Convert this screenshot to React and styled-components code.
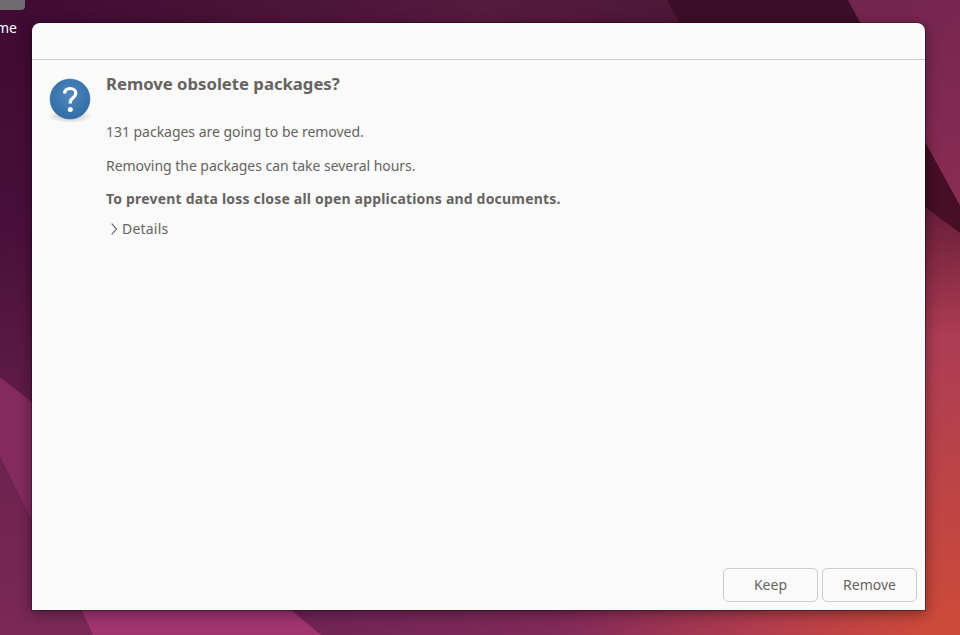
import React from "react";
import styled, { createGlobalStyle } from "styled-components";

const Global = createGlobalStyle`
  html, body { margin: 0; padding: 0; height: 100%; overflow: hidden; background: #4a1040; }
  body { font-family: "Noto Sans", "Open Sans", sans-serif; }
`;

const Stage = styled.div`
  position: relative;
  box-sizing: border-box;
  width: 960px;
  height: 635px;
  padding: 23px 35px 25px 32px;
  display: flex;
  overflow: hidden;
`;

const WallpaperSvg = styled.svg`
  position: absolute;
  inset: 0;
  width: 960px;
  height: 635px;
`;

const DockTab = styled.div`
  position: absolute;
  left: 0;
  top: 0;
  width: 25px;
  height: 10px;
  background: #6f6a6d;
  border-bottom-right-radius: 4px;
`;

const DesktopLabel = styled.span`
  position: absolute;
  left: -4px;
  top: 19px;
  font-size: 14px;
  line-height: 18px;
  color: #ffffff;
`;

const Dialog = styled.section`
  position: relative;
  flex: 1;
  display: flex;
  flex-direction: column;
  background: #fafafa;
  border-radius: 8px 8px 0 0;
  box-shadow: 0 3px 14px rgba(0, 0, 0, 0.45), 0 0 0 1px rgba(40, 0, 30, 0.35);
`;

const TitleBar = styled.header`
  height: 36px;
  border-bottom: 1px solid #cfcfcf;
`;

const Body = styled.div`
  flex: 1;
  display: flex;
  gap: 14px;
  padding: 16px 16px 0;
`;

const IconBox = styled.div`
  width: 44px;
  height: 50px;
  flex: none;
`;

const Content = styled.div`
  display: flex;
  flex-direction: column;
  color: #666361;
`;

const Title = styled.h1`
  margin: -2px 0 29px;
  font-size: 16.7px;
  line-height: 20px;
  font-weight: 700;
`;

const Paragraph = styled.p`
  margin: 0 0 ${(p) => p.$gap}px;
  font-size: 14px;
  line-height: 17px;
  font-weight: ${(p) => (p.$bold ? 700 : 400)};
  letter-spacing: ${(p) => (p.$bold ? "0.19px" : "-0.03px")};
`;

const Expander = styled.div`
  display: flex;
  align-items: center;
  gap: 5px;
  margin-left: 5px;
  font-size: 14px;
  line-height: 17px;
  letter-spacing: 0.2px;
`;

const Footer = styled.footer`
  display: flex;
  justify-content: flex-end;
  gap: 4px;
  padding: 0 8px 8px;
`;

const Button = styled.button`
  width: 95px;
  height: 34px;
  box-sizing: border-box;
  background: #fafafa;
  border: 1px solid #cdcdcd;
  border-radius: 5px;
  font-family: inherit;
  font-size: 14px;
  color: #666361;
  padding: 0 0 2px;
`;

function Wallpaper() {
  return (
    <WallpaperSvg viewBox="0 0 960 635">
      <defs>
        <linearGradient id="top" gradientUnits="userSpaceOnUse" x1="0" y1="0" x2="960" y2="100">
          <stop offset="0" stopColor="#3f0a33" />
          <stop offset="0.5" stopColor="#551a3e" />
          <stop offset="1" stopColor="#43132f" />
        </linearGradient>
        <linearGradient id="leftDark" gradientUnits="userSpaceOnUse" x1="0" y1="20" x2="20" y2="400">
          <stop offset="0" stopColor="#3f0a33" />
          <stop offset="0.55" stopColor="#4a0f3c" />
          <stop offset="1" stopColor="#5f1c47" />
        </linearGradient>
        <linearGradient id="leftLow" gradientUnits="userSpaceOnUse" x1="0" y1="460" x2="0" y2="635">
          <stop offset="0" stopColor="#6e234f" />
          <stop offset="1" stopColor="#7a2858" />
        </linearGradient>
        <linearGradient id="topRight" gradientUnits="userSpaceOnUse" x1="860" y1="0" x2="960" y2="200">
          <stop offset="0" stopColor="#72254f" />
          <stop offset="1" stopColor="#8b2b52" />
        </linearGradient>
        <linearGradient id="rightside" gradientUnits="userSpaceOnUse" x1="930" y1="215" x2="960" y2="620">
          <stop offset="0" stopColor="#6c1f3b" />
          <stop offset="0.3" stopColor="#ad3c54" />
          <stop offset="1" stopColor="#cb4a39" />
        </linearGradient>
        <linearGradient id="bottomRight" gradientUnits="userSpaceOnUse" x1="300" y1="610" x2="930" y2="630">
          <stop offset="0" stopColor="#702456" />
          <stop offset="0.4" stopColor="#80295a" />
          <stop offset="0.75" stopColor="#b53d4c" />
          <stop offset="1" stopColor="#cd4a39" />
        </linearGradient>
      </defs>
      <rect width="960" height="635" fill="url(#top)" />
      <polygon points="0,20 32,20 32,402 0,377" fill="url(#leftDark)" />
      <polygon points="0,377 32,402 32,522 0,457" fill="#842a60" />
      <polygon points="0,457 32,522 32,635 0,635" fill="url(#leftLow)" />
      <rect x="32" y="600" width="928" height="35" fill="url(#bottomRight)" />
      <polygon points="32,600 77,600 93,635 32,635" fill="#7a2858" />
      <polygon points="77,600 279,600 321,635 93,635" fill="#a03570" />
      <polygon points="667,0 848,0 880,60 700,60" fill="#3b0f28" />
      <polygon points="848,0 960,0 960,206 925,142" fill="url(#topRight)" />
      <polygon points="925,142 960,206 960,233 925,207" fill="#470e24" />
      <polygon points="925,207 960,233 960,635 925,635" fill="url(#rightside)" />
    </WallpaperSvg>
  );
}

function QuestionIcon() {
  return (
    <svg width="44" height="50" viewBox="0 0 44 50">
      <defs>
        <radialGradient id="disc" cx="0.5" cy="0.4" r="0.65">
          <stop offset="0" stopColor="#5088be" />
          <stop offset="1" stopColor="#2f6aa3" />
        </radialGradient>
        <radialGradient id="drop" cx="0.5" cy="0.5" r="0.5">
          <stop offset="0" stopColor="#000" stopOpacity="0.28" />
          <stop offset="1" stopColor="#000" stopOpacity="0" />
        </radialGradient>
      </defs>
      <ellipse cx="22" cy="40" rx="22" ry="7" fill="url(#drop)" />
      <circle cx="22" cy="23" r="20" fill="url(#disc)" stroke="#3f76a8" strokeWidth="0.6" />
      <path d="M16.5 17.5c.3-3.2 2.6-5 5.7-5 3.3 0 5.6 2 5.6 4.8 0 2.4-1.4 3.5-3 4.7-1.8 1.3-2.6 2.4-2.6 5.5"
        fill="none" stroke="#fff" strokeWidth="3.2" />
      <circle cx="22.3" cy="33.4" r="2.5" fill="#fff" />
    </svg>
  );
}

export default function App() {
  return (
    <>
      <Global />
      <Stage>
        <Wallpaper />
        <DockTab />
        <DesktopLabel>me</DesktopLabel>
        <Dialog>
          <TitleBar />
          <Body>
            <IconBox>
              <QuestionIcon />
            </IconBox>
            <Content>
              <Title>Remove obsolete packages?</Title>
              <Paragraph $gap={17}>131 packages are going to be removed.</Paragraph>
              <Paragraph $gap={16}>Removing the packages can take several hours.</Paragraph>
              <Paragraph $gap={13} $bold>To prevent data loss close all open applications and documents.</Paragraph>
              <Expander>
                <svg width="6" height="12" viewBox="0 0 6 12">
                  <path d="M0.7 0.7 L5.5 6 L0.7 11.3" fill="none" stroke="#5e5c5a" strokeWidth="1.1" />
                </svg>
                Details
              </Expander>
            </Content>
          </Body>
          <Footer>
            <Button>Keep</Button>
            <Button>Remove</Button>
          </Footer>
        </Dialog>
      </Stage>
    </>
  );
}
